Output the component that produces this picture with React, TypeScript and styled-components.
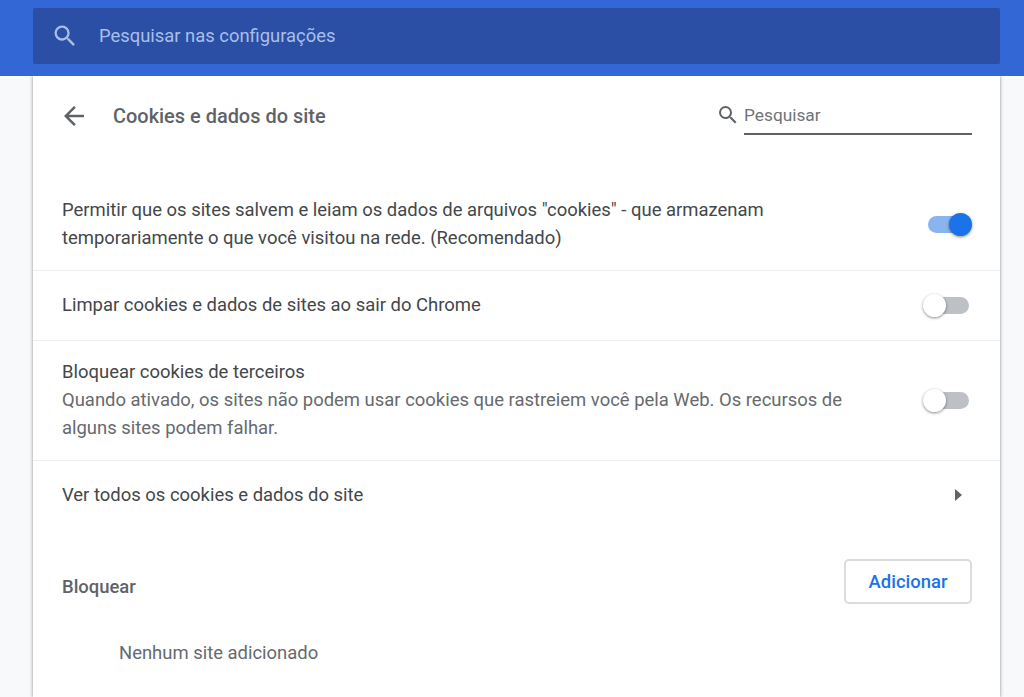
import React from "react";
import styled, { createGlobalStyle } from "styled-components";

const Global = createGlobalStyle`
  html, body { margin: 0; padding: 0; height: 100%; background: #f8f9fa; overflow: hidden; }
  body { font-family: Roboto, "Liberation Sans", sans-serif; }
`;
const Page = styled.div`
  width: 1024px;
  height: 697px;
  overflow: hidden;
  display: flex;
  flex-direction: column;
`;
const Header = styled.header`
  height: 76px;
  box-sizing: border-box;
  padding: 8px 24px 12px 33px;
  background: #3367d6;
  position: relative;
  z-index: 2;
  flex: none;
`;
const MainSearch = styled.div`
  height: 56px;
  background: #2a4fa5;
  border-radius: 2px;
  display: flex;
  align-items: center;
  padding-left: 18px;
  gap: 20px;
  color: #a9bfe9;
  font-size: 18.4px;
`;
const MainSearchLabel = styled.span`
  margin-top: -1px;
`;
const Card = styled.main`
  width: 967px;
  margin-left: 33px;
  flex: 1;
  background: #fff;
  box-shadow: 0 0 3px rgba(60, 64, 67, 0.45), 0 1px 4px rgba(60, 64, 67, 0.2);
  color: #43474a;
  font-size: 18.46px;
`;
const TitleBar = styled.div`
  height: 79px;
  display: flex;
  align-items: center;
  padding: 0 28px 0 26px;
  box-sizing: border-box;
`;
const BackIcon = styled.svg`
  width: 30px;
  height: 30px;
  margin-right: 24px;
  fill: #5f6368;
`;
const Title = styled.h1`
  margin: 0;
  font-size: 19.95px;
  font-weight: 500;
  color: #5f6368;
  flex: 1;
`;
const SmallSearch = styled.div`
  display: flex;
  align-items: center;
  gap: 4px;
`;
const SmallSearchIcon = styled.span`
  display: flex;
  margin-top: -1px;
`;
const SearchField = styled.div`
  width: 228px;
  height: 36px;
  box-sizing: border-box;
  border-bottom: 2px solid #5f6368;
  color: #6f7377;
  font-size: 17.3px;
  display: flex;
  align-items: center;
  padding-bottom: 2px;
  margin-top: 3px;
`;
const Row = styled.div<{ $h: number; $sep?: boolean; $top?: number }>`
  height: ${(p) => p.$h}px;
  box-sizing: border-box;
  display: flex;
  align-items: center;
  justify-content: space-between;
  padding: ${(p) => p.$top ?? 0}px 28px 0 29px;
  border-top: ${(p) => (p.$sep ? "1px solid #eceef0" : "none")};
`;
const RowText = styled.div`
  line-height: 28px;
  width: 810px;
  margin-top: -2px;
`;
const Secondary = styled.div`
  color: #666a6e;
`;
const Toggle = styled.div<{ $on?: boolean }>`
  position: relative;
  width: 41px;
  height: 17px;
  border-radius: 9px;
  background: ${(p) => (p.$on ? "#8ab4f0" : "#bdc1c6")};
  margin-right: 3px;
  flex: none;
`;
const Knob = styled.span<{ $on?: boolean }>`
  position: absolute;
  top: -3px;
  ${(p) => (p.$on ? "right: -3px;" : "left: -5px;")}
  width: 23px;
  height: 23px;
  border-radius: 50%;
  background: ${(p) => (p.$on ? "#1a73e8" : "#fff")};
  box-shadow: 0 1px 3px rgba(0, 0, 0, 0.45);
`;
const Arrow = styled.span`
  width: 0;
  height: 0;
  border-left: 7px solid #5f6368;
  border-top: 6px solid transparent;
  border-bottom: 6px solid transparent;
  margin: -2px 10px 0 0;
`;
const SectionHead = styled.div`
  display: flex;
  align-items: center;
  justify-content: space-between;
  padding: 0 28px 0 29px;
  margin-top: 30px;
  height: 44px;
`;
const SectionTitle = styled.h2`
  margin: 10px 0 0;
  font-size: 18.46px;
  font-weight: 500;
  color: #5f6368;
`;
const AddButton = styled.button`
  width: 128px;
  height: 45px;
  margin-top: -1px;
  background: #fff;
  border: 2px solid #dadce0;
  border-radius: 5px;
  color: #1a73e8;
  font: 500 18.46px Roboto, "Liberation Sans", sans-serif;
  padding: 0;
`;
const Empty = styled.div`
  margin: 35px 0 0 86px;
  line-height: 28px;
  color: #666a6e;
`;

const SearchIcon = ({ size, color }: { size: number; color: string }) => (
  <svg width={size} height={size} viewBox="0 0 24 24" fill={color}>
    <path d="M15.5 14h-.79l-.28-.27A6.471 6.471 0 0 0 16 9.5 6.5 6.5 0 1 0 9.5 16c1.61 0 3.09-.59 4.23-1.57l.27.28v.79l5 4.99L20.49 19l-4.99-5zm-6 0C7.01 14 5 11.99 5 9.5S7.01 5 9.5 5 14 7.01 14 9.5 11.99 14 9.5 14z" />
  </svg>
);

export default function App() {
  return (
    <Page>
      <Global />
      <Header>
        <MainSearch>
          <SearchIcon size={28} color="#a9bfe9" />
          <MainSearchLabel>Pesquisar nas configurações</MainSearchLabel>
        </MainSearch>
      </Header>
      <Card>
        <TitleBar>
          <BackIcon viewBox="0 0 24 24">
            <path d="M20 11H7.83l5.59-5.59L12 4l-8 8 8 8 1.41-1.41L7.83 13H20v-2z" />
          </BackIcon>
          <Title>Cookies e dados do site</Title>
          <SmallSearch>
            <SmallSearchIcon>
              <SearchIcon size={24} color="#5f6368" />
            </SmallSearchIcon>
            <SearchField>Pesquisar</SearchField>
          </SmallSearch>
        </TitleBar>
        <Row $h={115} $top={24}>
          <RowText>
            Permitir que os sites salvem e leiam os dados de arquivos "cookies" - que armazenam
            <br />
            temporariamente o que você visitou na rede. (Recomendado)
          </RowText>
          <Toggle $on>
            <Knob $on />
          </Toggle>
        </Row>
        <Row $h={70} $sep>
          <RowText>Limpar cookies e dados de sites ao sair do Chrome</RowText>
          <Toggle>
            <Knob />
          </Toggle>
        </Row>
        <Row $h={120} $sep>
          <RowText>
            Bloquear cookies de terceiros
            <Secondary>
              Quando ativado, os sites não podem usar cookies que rastreiem você pela Web. Os recursos de alguns sites podem falhar.
            </Secondary>
          </RowText>
          <Toggle>
            <Knob />
          </Toggle>
        </Row>
        <Row $h={70} $sep>
          <RowText>Ver todos os cookies e dados do site</RowText>
          <Arrow />
        </Row>
        <SectionHead>
          <SectionTitle>Bloquear</SectionTitle>
          <AddButton>Adicionar</AddButton>
        </SectionHead>
        <Empty>Nenhum site adicionado</Empty>
      </Card>
    </Page>
  );
}
